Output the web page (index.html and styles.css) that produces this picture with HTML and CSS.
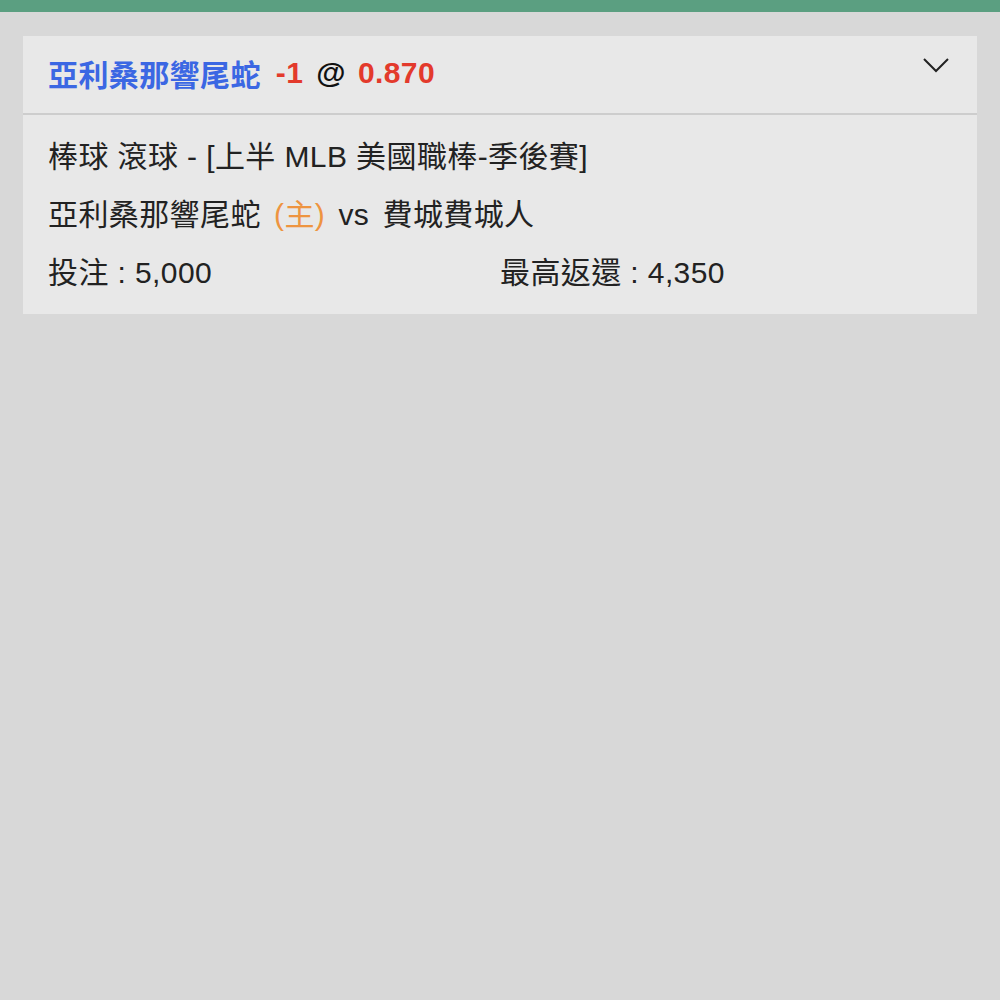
FILE: index.html
```html
<!DOCTYPE html>
<html lang="zh-Hant">
<head>
<meta charset="utf-8">
<link rel="stylesheet" href="styles.css">
</head>
<body>
<div class="topbar"></div>
<main class="page">
  <section class="card">
    <header class="card-head">
      <div class="title">
        <span class="team">亞利桑那響尾蛇</span>
        <span class="hcp">-1</span>
        <span class="at">@</span>
        <span class="odds">0.870</span>
      </div>
      <svg class="chev" width="28" height="16" viewBox="0 0 28 16"><path d="M2 2 L14 14 L26 2" fill="none" stroke="#222" stroke-width="2"/></svg>
    </header>
    <div class="card-body">
      <div class="line">棒球 滾球 - [上半 MLB 美國職棒-季後賽]</div>
      <div class="line teams">亞利桑那響尾蛇 <span class="home">(主)</span> vs 費城費城人</div>
      <div class="line cols">
        <div class="col">投注 : 5,000</div>
        <div class="col">最高返還 : 4,350</div>
      </div>
    </div>
  </section>
</main>
</body>
</html>
```

FILE: styles.css
```css
html, body {
  margin: 0;
  padding: 0;
}
body {
  width: 1000px;
  height: 1000px;
  background: #d8d8d8;
  font-family: "Liberation Sans", "Noto Sans CJK TC", sans-serif;
  color: #222;
  overflow: hidden;
}
.topbar {
  height: 12px;
  background: #5b9f81;
}
.page {
  padding: 24px 23px;
}
.card {
  background: #e8e8e8;
}
.card-head {
  height: 79px;
  box-sizing: border-box;
  display: flex;
  align-items: center;
  justify-content: space-between;
  padding: 0 27px 3px 25px;
  border-bottom: 2px solid #cdcdcd;
}
.title {
  font-size: 30px;
  font-weight: bold;
  letter-spacing: 0.4px;
  display: flex;
  align-items: center;
  white-space: pre;
}
.team { color: #3b67e3; margin-right: 15px; }
.hcp { color: #e33a2c; margin-right: 13px; }
.at { color: #111; margin-right: 12px; }
.odds { color: #e33a2c; }
.chev {
  align-self: flex-start;
  margin-top: 21px;
}
.card-body {
  padding: 13px 25px 12px 25px;
  font-size: 30px;
  letter-spacing: 0.4px;
}
.line {
  line-height: 58px;
  white-space: nowrap;
}
.teams {
  word-spacing: 4.5px;
}
.home { color: #ee9440; }
.cols {
  display: grid;
  grid-template-columns: 1fr 1fr;
}
```
